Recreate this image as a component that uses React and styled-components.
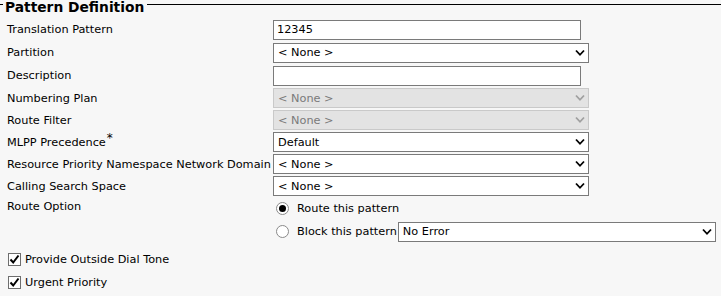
import React from "react";
import styled, { createGlobalStyle } from "styled-components";

const Global = createGlobalStyle`
  html, body { margin: 0; padding: 0; background: #f7f7f7; }
  body { font-family: "DejaVu Sans", Verdana, sans-serif; font-size: 11.3px; color: #000; }
`;

const Fieldset = styled.fieldset`
  margin: 0;
  padding: 9px 0 0 7px;
  border: none;
  border-top: 1px solid #000;
  min-width: 0;
`;

const Legend = styled.legend`
  font-weight: bold;
  font-size: 13.8px;
  height: 9px;
  line-height: 15px;
  padding: 0 3px 0 2px;
  margin-left: -4px;
  white-space: nowrap;
`;

const Grid = styled.div`
  display: grid;
  grid-template-columns: 266px 1fr;
  grid-template-rows: 23px 23px 23px 22px 22px 22px 22px 22px auto;
  align-items: center;
`;

const Label = styled.div`
  white-space: nowrap;
  align-self: ${(p) => (p.$top ? "start" : "center")};
  padding-top: ${(p) => (p.$top ? "3px" : "0")};
`;

const Star = styled.sup`
  font-size: 12px;
  line-height: 0;
  vertical-align: 4px;
  margin-left: 1px;
`;

const TextInput = styled.input`
  box-sizing: border-box;
  width: ${(p) => p.$w || 308}px;
  height: 20px;
  border: 1px solid #7a7a7a;
  background: #fff;
  font: inherit;
  padding: 0 3px;
  margin: 0;
  outline: none;
`;

const SelectWrap = styled.div`
  position: relative;
  width: ${(p) => p.$w || 316}px;
  height: 20px;
`;

const Select = styled.div`
  box-sizing: border-box;
  width: 100%;
  height: 100%;
  border: 1px solid ${(p) => (p.$disabled ? "#c9c9c9" : "#7a7a7a")};
  background: ${(p) => (p.$disabled ? "#e3e3e3" : "#fff")};
  color: ${(p) => (p.$disabled ? "#7a7a7a" : "#000")};
  display: flex;
  align-items: center;
  padding: 0 4px;
  white-space: nowrap;
`;

const Chevron = styled.svg`
  position: absolute;
  right: 4px;
  top: 6px;
  width: 10px;
  height: 8px;
`;

const Dropdown = ({ value, disabled, w }) => (
  <SelectWrap $w={w}>
    <Select $disabled={disabled}>{value}</Select>
    <Chevron viewBox="0 0 10 8">
      <path
        d="M1 1.5 L5 5.8 L9 1.5"
        fill="none"
        stroke={disabled ? "#a0a0a0" : "#000"}
        strokeWidth="1.8"
      />
    </Chevron>
  </SelectWrap>
);

const RadioGroup = styled.div`
  align-self: start;
  display: grid;
  grid-auto-rows: 23px;
  align-items: center;
`;

const RadioRow = styled.div`
  display: flex;
  align-items: center;
  padding-left: 3px;
  white-space: nowrap;
`;

const RadioCircle = styled.span`
  box-sizing: border-box;
  width: 13px;
  height: 13px;
  border-radius: 50%;
  border: 1px solid #8a8a8a;
  background: #fff;
  display: inline-flex;
  align-items: center;
  justify-content: center;
  margin-right: 8px;
  &::after {
    content: "";
    width: 7px;
    height: 7px;
    border-radius: 50%;
    background: ${(p) => (p.$on ? "#000" : "transparent")};
  }
`;

const InlineSelect = styled.div`
  margin-left: 1px;
`;

const Checks = styled.div`
  display: grid;
  grid-auto-rows: 23px;
  align-items: center;
  padding-top: 5px;
`;

const CheckRow = styled.label`
  display: flex;
  align-items: center;
  padding-left: 1px;
`;

const Box = styled.span`
  box-sizing: border-box;
  width: 13px;
  height: 13px;
  border: 1px solid #6e6e6e;
  background: #fff;
  display: inline-flex;
  align-items: center;
  justify-content: center;
  margin-right: 4px;
`;

const Check = () => (
  <Box>
    <svg width="11" height="11" viewBox="0 0 11 11">
      <path d="M1.5 5.5 L4.2 8.5 L9.5 1.5" fill="none" stroke="#000" strokeWidth="2" />
    </svg>
  </Box>
);

export default function App() {
  return (
    <>
      <Global />
      <Fieldset>
        <Legend>Pattern Definition</Legend>
        <Grid>
          <Label>Translation Pattern</Label>
          <TextInput defaultValue="12345" />
          <Label>Partition</Label>
          <Dropdown value="< None >" />
          <Label>Description</Label>
          <TextInput defaultValue="" />
          <Label>Numbering Plan</Label>
          <Dropdown value="< None >" disabled />
          <Label>Route Filter</Label>
          <Dropdown value="< None >" disabled />
          <Label>
            MLPP Precedence<Star>*</Star>
          </Label>
          <Dropdown value="Default" />
          <Label>Resource Priority Namespace Network Domain</Label>
          <Dropdown value="< None >" />
          <Label>Calling Search Space</Label>
          <Dropdown value="< None >" />
          <Label $top>Route Option</Label>
          <RadioGroup>
            <RadioRow>
              <RadioCircle $on />
              Route this pattern
            </RadioRow>
            <RadioRow>
              <RadioCircle />
              Block this pattern
              <InlineSelect>
                <Dropdown value="No Error" w={318} />
              </InlineSelect>
            </RadioRow>
          </RadioGroup>
        </Grid>
        <Checks>
          <CheckRow>
            <Check />
            Provide Outside Dial Tone
          </CheckRow>
          <CheckRow>
            <Check />
            Urgent Priority
          </CheckRow>
        </Checks>
      </Fieldset>
    </>
  );
}
